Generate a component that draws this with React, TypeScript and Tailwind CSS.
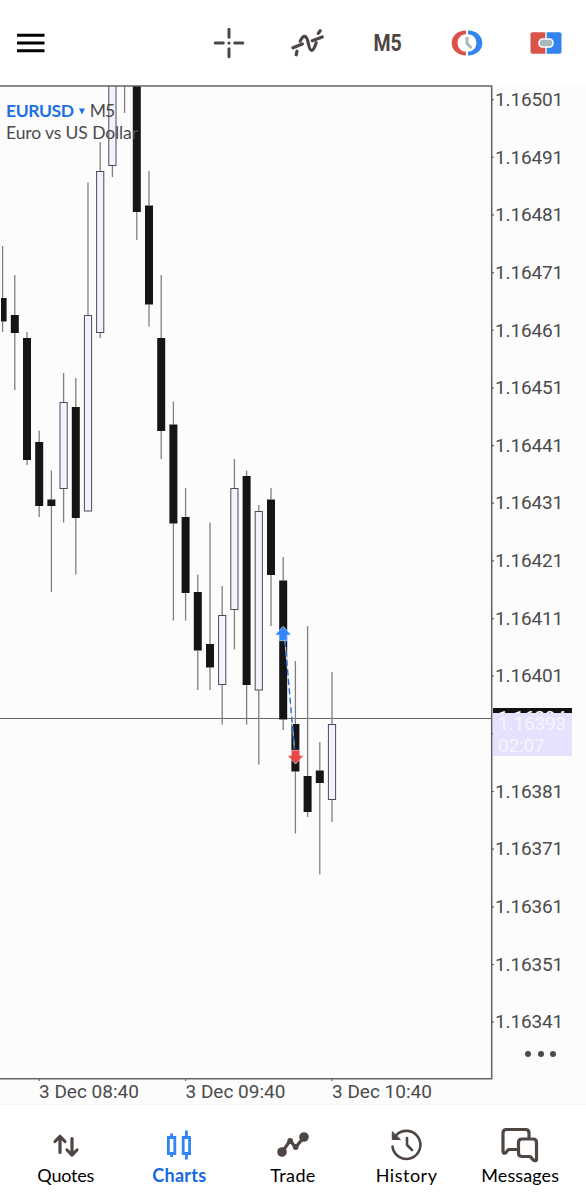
import type { ReactNode } from "react";

interface Candle {
  high: number;
  top: number;
  bottom: number;
  low: number;
  up?: boolean;
}

// y values in chart pixels, one candle every 12.2px
const candles: Candle[] = [
  { high: 246, top: 298, bottom: 321.5, low: 332 },
  { high: 275, top: 315, bottom: 333, low: 390 },
  { high: 332, top: 338, bottom: 460, low: 465 },
  { high: 430.5, top: 442, bottom: 506, low: 517 },
  { high: 470.5, top: 499.5, bottom: 506, low: 592 },
  { high: 373, top: 402, bottom: 489, low: 522.5, up: true },
  { high: 378, top: 407, bottom: 518, low: 574.5 },
  { high: 182.5, top: 315, bottom: 511.5, low: 511.5, up: true },
  { high: 142, top: 171, bottom: 333, low: 338, up: true },
  { high: 80, top: 80, bottom: 166, low: 177, up: true },
  { high: 80, top: 80, bottom: 80, low: 113 },
  { high: 80, top: 80, bottom: 212, low: 240 },
  { high: 171, top: 205.5, bottom: 304.5, low: 326.5 },
  { high: 275, top: 338, bottom: 431, low: 459 },
  { high: 401.5, top: 424.5, bottom: 523.5, low: 620.5 },
  { high: 488, top: 517, bottom: 593, low: 620.5 },
  { high: 574.5, top: 592, bottom: 650.5, low: 690 },
  { high: 522.5, top: 644, bottom: 667.5, low: 690 },
  { high: 586, top: 615, bottom: 685, low: 724.5, up: true },
  { high: 459, top: 488, bottom: 610, low: 649.5, up: true },
  { high: 470.5, top: 476, bottom: 685, low: 724.5 },
  { high: 505, top: 511, bottom: 690.5, low: 764.5, up: true },
  { high: 488, top: 499.5, bottom: 575, low: 626 },
  { high: 557, top: 580.5, bottom: 719.5, low: 730 },
  { high: 661, top: 724, bottom: 771.5, low: 833.5 },
  { high: 626, top: 776, bottom: 812, low: 817 },
  { high: 742, top: 770.5, bottom: 783, low: 874.5 },
  { high: 672, top: 724, bottom: 800, low: 822, up: true },
];

const prices = [
  "1.16501", "1.16491", "1.16481", "1.16471", "1.16461", "1.16451", "1.16441", "1.16431", "1.16421",
  "1.16411", "1.16401", "1.16391", "1.16381", "1.16371", "1.16361", "1.16351", "1.16341",
];

const times = ["3 Dec 08:40", "3 Dec 09:40", "3 Dec 10:40"];

function Chart() {
  return (
    <svg className="block shrink-0" width="495" height="996" viewBox="0 85 495 996" fill="none">
      <path d="M0 718.5H491" stroke="#62665f" strokeWidth="1.2" />
      <g clipPath="url(#plot)">
        {candles.map((c, i) => {
          const x = 2.6 + i * 12.2;
          return (
            <g key={i}>
              <path d={`M${x} ${c.high}V${c.top}M${x} ${c.bottom}V${c.low}`} stroke="#808080" strokeWidth="1.3" />
              {c.up ? (
                <rect x={x - 3.6} y={c.top + 0.5} width="7.2" height={c.bottom - c.top - 1} fill="#f3f2fe" stroke="#4c4b58" />
              ) : (
                <rect x={x - 4} y={c.top} width="8" height={c.bottom - c.top} fill="#151515" />
              )}
            </g>
          );
        })}
      </g>
      <clipPath id="plot">
        <rect x="1" y="86" width="490" height="992" />
      </clipPath>
      <path d="M0 86H491.7V1078.7H0" stroke="#5d6466" strokeWidth="1.5" />
      {prices.map((p, i) => (
        <path key={p} d={`M492 ${99.6 + i * 57.66}h2`} stroke="#5d6466" strokeWidth="1.2" />
      ))}
      <path d="M39.2 1079v2M185.6 1079v2M332 1079v2" stroke="#5d6466" strokeWidth="1.2" />

      {/* Closed trade: entry, exit and the line joining them */}
      <path d="M285 641L294.5 749" stroke="#dbe7f8" strokeWidth="1" />
      <path d="M285 641L294.5 749" stroke="#2b69cb" strokeWidth="1.4" strokeDasharray="6 3.5" />
      <path d="M283.2 626.3L291.3 635H287.2V640.7H279.2V635H275.1Z" fill="#3385fb" stroke="#e8f1ff" strokeWidth=".6" />
      <path d="M295.6 764L287.5 755.6H291.5V750.3H299.7V755.6H303.7Z" fill="#ea4848" stroke="#ffe9e9" strokeWidth=".6" />
    </svg>
  );
}

function PriceTag() {
  return (
    <div className="absolute left-[-2px] top-[2.5px] w-[79px]">
      <div className="h-[5px] overflow-hidden bg-[#12120f]">
        <div className="pt-[3px] pl-[5px] text-[19px] leading-[14px] text-white">1.16394</div>
      </div>
      <div className="h-[43px] bg-[#e4e2fc] pl-[5px] text-[19px] leading-[21.5px] text-[#f6f5ff]">
        <div>1.16393</div>
        <div>02:07</div>
      </div>
    </div>
  );
}

function HeaderItem({ children }: { children: ReactNode }) {
  return <button className="flex w-[79.4px] items-center justify-center">{children}</button>;
}

function Header() {
  return (
    <header className="flex h-[85px] shrink-0 items-stretch bg-white pl-[17px] text-[#4e4644]">
      <button aria-label="Menu">
        <svg width="28" height="20" viewBox="0 0 28 20" stroke="#000" strokeWidth="3">
          <path d="M0 2.3H27.5M0 10H27.5M0 17.8H27.5" />
        </svg>
      </button>
      <div className="ml-auto flex">
        <HeaderItem>
          <svg width="32" height="32" viewBox="0 0 32 32" stroke="currentColor" strokeWidth="3" strokeLinecap="round">
            <path d="M2.2 16H10.3M21.7 16H29.8M16 2.2V10.3M16 21.7V29.8" />
            <circle cx="16" cy="16" r="1.6" fill="currentColor" stroke="none" />
          </svg>
        </HeaderItem>
        <HeaderItem>
          <svg width="34" height="30" viewBox="0 0 34 30" fill="none" stroke="currentColor" strokeWidth="3.2" strokeLinecap="round">
            <path d="M2 19.8L11.3 16M21.3 12.8L31.2 9" />
            <path d="M5.2 26.8L6 23.2" />
            <path d="M9.2 13.2C10.8 9.5 12.3 8.3 13.8 8.4C18.3 9 16.6 22.300 20.600 22.300C23 22.300 24 18.500 25.200 14.700" />
            <path d="M27.3 5.400L29.200 2.800" />
          </svg>
        </HeaderItem>
        <HeaderItem>
          <span className="mt-[2px] font-['Roboto'] text-[23px] font-bold leading-none [transform:scaleX(.85)]">M5</span>
        </HeaderItem>
        <HeaderItem>
          <svg width="32" height="26" viewBox="0 0 32 26" fill="none">
            <path d="M15 .6C6.500 .6 .7 6 .7 13S6.500 25.400 15 25.400V21.700C9.800 21.500 6.600 17.800 6.600 13S9.800 4.500 15 4.300Z" fill="#d9534a" />
            <path d="M17 .6C25.500 .6 31.300 6 31.300 13S25.500 25.400 17 25.400V21.700C22.200 21.500 25.400 17.800 25.400 13S22.200 4.500 17 4.300Z" fill="#3384ef" />
            <path d="M16 7V13.500L20.500 18" stroke="#a9b7bf" strokeWidth="3" />
          </svg>
        </HeaderItem>
        <HeaderItem>
          <svg width="32" height="22" viewBox="0 0 32 22">
            <path d="M2.500 .3H15.300V21.700H2.500Q.5 21.700 .5 19.700V2.300Q.5 .3 2.500 .3Z" fill="#d9534a" />
            <path d="M16.700 .3H29.500Q31.500 .3 31.500 2.300V19.700Q31.500 21.700 29.500 21.700H16.700Z" fill="#3384ef" />
            <rect x="9" y="7" width="14" height="8" rx="3.500" fill="#a9b7bf" stroke="#fff" strokeWidth="1.500" />
          </svg>
        </HeaderItem>
      </div>
    </header>
  );
}

const navItems: { label: string; active?: boolean; className: string; icon: ReactNode }[] = [
  {
    label: "Quotes",
    className: "tracking-[-.2px]",
    icon: (
      <g strokeWidth="3.200">
        <path d="M14 28.500V12.500M9 17.500L14 12.300L19 17.500" />
        <path d="M26 14.500V31M21 26L26 31.200L31 26" />
      </g>
    ),
  },
  {
    label: "Charts",
    active: true,
    className: "tracking-[.3px] font-bold",
    icon: (
      <g strokeWidth="2.800" strokeLinecap="butt" strokeLinejoin="miter">
        <path d="M9.400 13.500H15.800V29.500H9.400ZM12.600 9.500V13M12.600 30V33" />
        <path d="M24.200 13.500H30.600V29.500H24.200ZM27.400 6.500V13M27.400 30V35.500" />
      </g>
    ),
  },
  {
    label: "Trade",
    className: "tracking-[.4px]",
    icon: (
      <g strokeWidth="3.200">
        <path d="M9 28.200L17.200 16.500L22.500 23.500L31 13" />
        <circle cx="17.200" cy="17" r="1.300" fill="currentColor" />
        <circle cx="22.700" cy="23" r="1.300" fill="currentColor" />
        <circle cx="9" cy="28" r="3.200" fill="currentColor" />
        <circle cx="31" cy="13" r="3.200" fill="currentColor" />
      </g>
    ),
  },
  {
    label: "History",
    className: "tracking-[.5px]",
    icon: (
      <g strokeWidth="2.600">
        <path d="M5.500 22.500A14 14 0 1 0 9 11.500" />
        <path d="M5.300 8V15.500H13Z" fill="currentColor" strokeWidth="1" />
        <path d="M20 14V21L25 26" />
      </g>
    ),
  },
  {
    label: "Messages",
    className: "tracking-[.1px]",
    icon: (
      <g strokeWidth="3.200">
        <path d="M18 25.500H8.500L5.500 29Q3 30 3 27V9Q3 5.500 6.500 5.500H25.500Q29 5.500 29 9V13" />
        <path d="M22 15H33Q36.500 15 36.500 18.500V36Q34.500 38 32 34.500L30 32.500H22Q18.500 32.500 18.500 29V18.500Q18.500 15 22 15Z" />
      </g>
    ),
  },
];

function BottomNav() {
  return (
    <nav className="grid h-[96px] shrink-0 grid-cols-5 border-t border-[#f5f5f5] bg-white px-[9px]">
      {navItems.map((item) => (
        <button key={item.label} className={`flex flex-col items-center pt-[19px] ${item.active ? "text-[#3384f6]" : "text-[#4f4644]"}`}>
          <svg width="40" height="40" viewBox="0 0 40 40" fill="none" stroke="currentColor" strokeLinecap="round" strokeLinejoin="round">
            {item.icon}
          </svg>
          <span className={`whitespace-nowrap font-['Lato'] text-[18px] leading-[22px] ${item.className} ${item.active ? "text-[#1669e3]" : "text-black"}`}>
            {item.label}
          </span>
        </button>
      ))}
    </nav>
  );
}

export default function App() {
  return (
    <div className="flex h-[1200px] w-[586px] flex-col overflow-hidden bg-white font-['Roboto',sans-serif]">
      <Header />
      <main className="flex h-[1019px] flex-col overflow-hidden bg-[#fcfcfc] text-[#4b4b4b]">
        <div className="relative flex h-[996px] shrink-0">
          <Chart />
          <div className="-mt-[13.700px] flex flex-col text-[19px] tracking-[-.15px]">
            {prices.map((price) => (
              <div key={price} className="relative flex h-[57.660px] shrink-0 items-center">
                {price === "1.16391" ? <PriceTag /> : price}
              </div>
            ))}
            <div className="flex gap-[6.500px] pl-[30px]">
              <i className="size-[6px] rounded-full bg-[#4b4b4b]" />
              <i className="size-[6px] rounded-full bg-[#4b4b4b]" />
              <i className="size-[6px] rounded-full bg-[#4b4b4b]" />
            </div>
          </div>
          <div className="absolute left-[6px] top-[15px] font-['Lato'] text-[17.500px] leading-[22px]">
            <div className="flex items-center">
              <span className="font-bold tracking-[-.4px] text-[#1c71e5]">EURUSD</span>
              <svg className="mr-[5px] ml-[5px]" width="6" height="7" viewBox="0 0 6 7">
                <path d="M0 .5H6L3 6.500Z" fill="#1c71e5" />
              </svg>
              <span className="tracking-[-1px]">M5</span>
            </div>
            <div className="tracking-[-.1px]">Euro vs US Dollar</div>
          </div>
        </div>
        <div className="flex pl-[39px] text-[19px] leading-[22px]">
          {times.map((time) => (
            <span key={time} className="w-[146.500px] shrink-0">{time}</span>
          ))}
        </div>
      </main>
      <BottomNav />
    </div>
  );
}
